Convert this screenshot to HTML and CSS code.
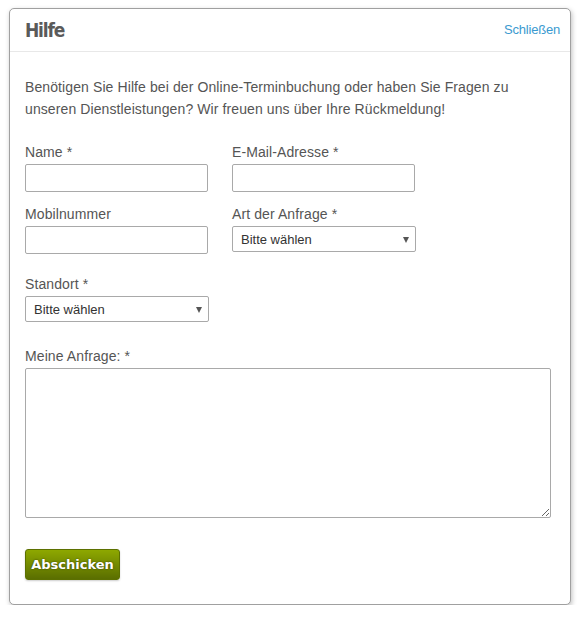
FILE: index.html
```html
<!DOCTYPE html>
<html lang="de">
<head>
    <meta charset="UTF-8">
    <title>Hilfe</title>
    <link rel="stylesheet" href="styles.css">
</head>
<body>
    <div class="dialog">
        <div class="dialog-header">
            <h2>Hilfe</h2>
            <a href="#" class="close">Schließen</a>
        </div>
        <div class="dialog-body">
            <p>Benötigen Sie Hilfe bei der Online-Terminbuchung oder haben Sie Fragen zu unseren Dienstleistungen? Wir freuen uns über Ihre Rückmeldung!</p>

            <div class="row">
                <div class="field">
                    <label>Name *</label>
                    <input type="text">
                </div>
                <div class="field">
                    <label>E-Mail-Adresse *</label>
                    <input type="text">
                </div>
            </div>

            <div class="row">
                <div class="field">
                    <label>Mobilnummer</label>
                    <input type="text">
                </div>
                <div class="field">
                    <label>Art der Anfrage *</label>
                    <div class="select">Bitte wählen</div>
                </div>
            </div>

            <div class="row row-wide">
                <div class="field">
                    <label>Standort *</label>
                    <div class="select">Bitte wählen</div>
                </div>
            </div>

            <div class="field message">
                <label>Meine Anfrage: *</label>
                <textarea></textarea>
            </div>

            <button type="button">Abschicken</button>
        </div>
    </div>
</body>
</html>
```

FILE: styles.css
```css
body {
    margin: 0;
    background: #fff;
    font-family: "Liberation Sans", Arial, sans-serif;
    font-size: 14px;
    color: #555;
}

.dialog {
    margin: 8px 0 0 9px;
    width: 560px;
    border: 1px solid #a0a0a0;
    border-radius: 5px;
    box-shadow: 1px 2px 5px rgba(0,0,0,0.25);
    background: #fff;
}

.dialog-header {
    display: flex;
    justify-content: space-between;
    align-items: center;
    height: 42px;
    padding: 0 10px 0 15px;
    border-bottom: 1px solid #e8e8e8;
}

.dialog-header h2 {
    margin: 0;
    font-family: "DejaVu Sans Condensed", "DejaVu Sans", sans-serif;
    font-stretch: condensed;
    font-weight: bold;
    font-size: 19px;
    color: #5a5a5a;
    letter-spacing: -1.2px;
}

.close {
    color: #3a9ad0;
    font-size: 13px;
    letter-spacing: -0.2px;
    text-decoration: none;
    margin-bottom: 1px;
}

.dialog-body {
    padding: 24px 19px 24px 15px;
}

p {
    margin: 0 0 22px;
    line-height: 22px;
    letter-spacing: 0.1px;
}

label {
    line-height: 20px;
    letter-spacing: 0.1px;
}

.row {
    display: flex;
    gap: 24px;
    margin-bottom: 12px;
}

.row-wide {
    margin-top: 20px;
    margin-bottom: 24px;
}

.field {
    display: flex;
    flex-direction: column;
    gap: 2px;
}

input[type="text"] {
    box-sizing: border-box;
    width: 183px;
    height: 28px;
    margin: 0;
    border: 1px solid #a9a9a9;
    border-radius: 2px;
    font: inherit;
}

.select {
    box-sizing: border-box;
    position: relative;
    width: 184px;
    height: 26px;
    padding: 0 8px;
    border: 1px solid #a9a9a9;
    border-radius: 2px;
    font-size: 13px;
    line-height: 25px;
    color: #333;
}

.select::after {
    content: '';
    position: absolute;
    right: 6px;
    top: 10px;
    border-left: 3.5px solid transparent;
    border-right: 3.5px solid transparent;
    border-top: 6px solid #555;
}

textarea {
    box-sizing: border-box;
    width: 526px;
    height: 150px;
    margin: 0;
    border: 1px solid #a9a9a9;
    border-radius: 2px;
    font: inherit;
    display: block;
}

button {
    margin-top: 31px;
    width: 95px;
    height: 31px;
    padding: 0;
    border: 1px solid #5c7000;
    border-radius: 3px;
    background: linear-gradient(#8ea800, #5a6e00);
    color: #fff;
    font-family: "DejaVu Sans", Verdana, sans-serif;
    font-weight: bold;
    font-size: 13px;
    text-shadow: 0 0 2px rgba(0,0,0,0.6);
    box-shadow: 0 1px 2px rgba(0,0,0,0.2);
    display: block;
}
```
